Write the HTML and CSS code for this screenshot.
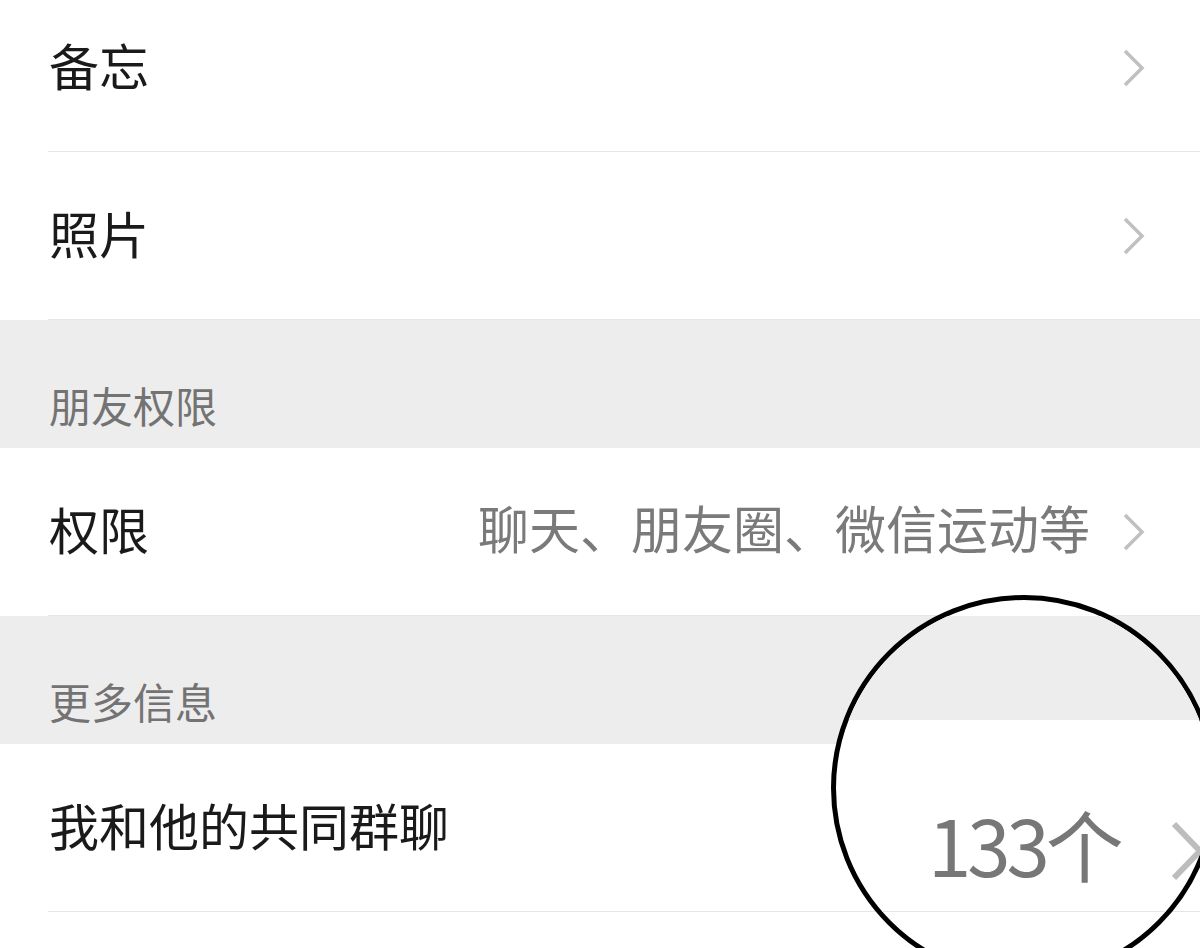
FILE: index.html
```html
<!DOCTYPE html>
<html lang="zh-CN">
<head>
  <meta charset="UTF-8">
  <meta name="viewport" content="width=device-width, initial-scale=1">
  <title>资料设置</title>
  <link rel="stylesheet" href="styles.css">
</head>
<body>
  <div class="page">
    <div class="list">
      <div class="row">
        <div class="row-inner">
          <span class="label">备忘</span>
          <svg class="chevron" viewBox="0 0 24 40"><polyline points="3,3 20,20 3,37"/></svg>
        </div>
      </div>
      <div class="row">
        <div class="row-inner">
          <span class="label">照片</span>
          <svg class="chevron" viewBox="0 0 24 40"><polyline points="3,3 20,20 3,37"/></svg>
        </div>
      </div>

      <div class="section-title">朋友权限</div>
      <div class="row">
        <div class="row-inner">
          <span class="label">权限</span>
          <span class="value">聊天、朋友圈、微信运动等</span>
          <svg class="chevron" viewBox="0 0 24 40"><polyline points="3,3 20,20 3,37"/></svg>
        </div>
      </div>

      <div class="section-title">更多信息</div>
      <div class="row">
        <div class="row-inner">
          <span class="label">我和他的共同群聊</span>
          <svg class="chevron" viewBox="0 0 24 40"><polyline points="3,3 20,20 3,37"/></svg>
        </div>
      </div>
    </div>

    <!-- magnifier lens over the group count -->
    <div class="lens">
      <div class="lens-band"></div>
      <div class="lens-line"></div>
      <span class="lens-value">133个</span>
      <svg class="lens-chevron" viewBox="0 0 36 64"><polyline points="5,5 31,32 5,59"/></svg>
    </div>
  </div>
</body>
</html>
```

FILE: styles.css
```css
body {
  margin: 0;
  padding: 0;
  background-color: #ffffff;
  font-family: "Noto Sans CJK SC", "Noto Sans", sans-serif;
  color: #1a1a1a;
  overflow: hidden;
}
.page {
  position: relative;
  width: 1200px;
  height: 948px;
  overflow: hidden;
}
.list {
  margin-top: -16px;
}
.row {
  padding-left: 48px;
  background-color: #ffffff;
}
.row-inner {
  height: 168px;
  box-sizing: border-box;
  display: flex;
  align-items: center;
  padding: 0 54px 8px 0;
  border-bottom: 1px solid #e6e6e6;
}
.row-inner .chevron {
  margin-top: 8px;
}
.label {
  font-size: 50px;
  line-height: 1.2;
  margin-left: 1px;
  flex: 1;
}
.value {
  font-size: 51px;
  line-height: 1.2;
  color: #7a7a7a;
  margin-right: 32px;
}
.chevron {
  width: 24px;
  height: 40px;
  fill: none;
  stroke: #c0c0c0;
  stroke-width: 3.5;
}
.section-title {
  height: 128px;
  box-sizing: border-box;
  background-color: #ededed;
  display: flex;
  align-items: flex-end;
  padding: 0 0 18px 49px;
  font-size: 42px;
  line-height: 1.2;
  color: #737373;
}
.lens {
  position: absolute;
  left: 831px;
  top: 595px;
  width: 376px;
  height: 376px;
  border: 5px solid #000000;
  border-radius: 50%;
  background-color: #ffffff;
  overflow: hidden;
}
.lens-band {
  position: absolute;
  left: 0;
  right: 0;
  top: 16px;
  height: 104px;
  background-color: #ededed;
}
.lens-line {
  position: absolute;
  left: 0;
  right: 0;
  top: 311px;
  height: 1px;
  background-color: #e6e6e6;
}
.lens-value {
  position: absolute;
  left: 92px;
  top: 197px;
  font-size: 78px;
  line-height: 1.2;
  letter-spacing: -4px;
  color: #777777;
}
.lens-chevron {
  position: absolute;
  left: 333px;
  top: 219px;
  width: 36px;
  height: 64px;
  fill: none;
  stroke: #bdbdbd;
  stroke-width: 6;
}
```
